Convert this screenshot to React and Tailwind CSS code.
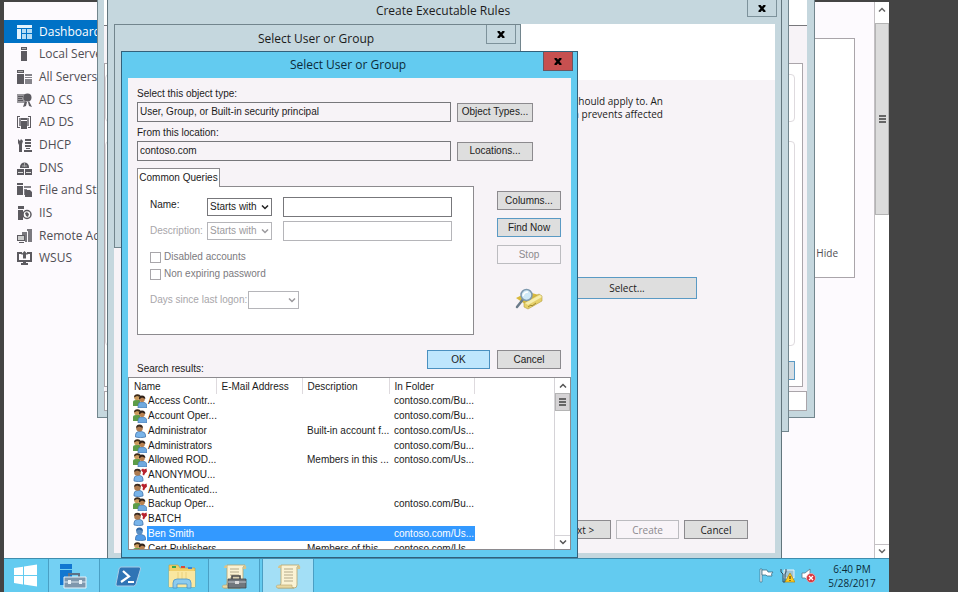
import React, { useState } from "react";
import clsx from "clsx";

const NAV_ITEMS = [
  { label: "Dashboard", icon: "dashboard" },
  { label: "Local Server", icon: "server" },
  { label: "All Servers", icon: "servers" },
  { label: "AD CS", icon: "adcs" },
  { label: "AD DS", icon: "adds" },
  { label: "DHCP", icon: "dhcp" },
  { label: "DNS", icon: "dns" },
  { label: "File and Storage", icon: "files" },
  { label: "IIS", icon: "iis" },
  { label: "Remote Access", icon: "remote" },
  { label: "WSUS", icon: "wsus" },
];

const RESULTS = [
  { name: "Access Contr...", type: "group", folder: "contoso.com/Bu..." },
  { name: "Account Oper...", type: "group", folder: "contoso.com/Bu..." },
  { name: "Administrator", type: "user", description: "Built-in account f...", folder: "contoso.com/Us..." },
  { name: "Administrators", type: "group", folder: "contoso.com/Bu..." },
  { name: "Allowed ROD...", type: "group", description: "Members in this ...", folder: "contoso.com/Us..." },
  { name: "ANONYMOU...", type: "special" },
  { name: "Authenticated...", type: "special" },
  { name: "Backup Oper...", type: "group", folder: "contoso.com/Bu..." },
  { name: "BATCH", type: "special" },
  { name: "Ben Smith", type: "user", folder: "contoso.com/Us..." },
  { name: "Cert Publishers", type: "group", description: "Members of this ...", folder: "contoso.com/Us..." },
];

const NAV_SHAPES = {
  dashboard: (
    <>
      <path d="M0 0h15v3H0zM0 4h4v10H0z" />
      <path d="M5 4h4v4H5zM10 4h5v4h-5zM5 9h4v5H5zM10 9h5v5h-5z" fill="#b5dcf5" />
    </>
  ),
  server: (
    <>
      <path d="M4 0h6v3H4zM4 4h6v10H4z" />
      <path d="M5 1h4v1H5z" fill="#aaa" />
    </>
  ),
  servers: (
    <>
      <path d="M0 0h7v3H0zM0 4h7v10H0z" />
      <path d="M8 4h7v2H8zM8 7h7v1H8zM8 9h7v5H8z" fill="#85838a" />
      <path d="M1 1h5v1H1z" fill="#aaa" />
    </>
  ),
  adcs: (
    <>
      <path d="M0 1h8v9H0z" fill="#9a989d" />
      <path d="M1 3h5v1H1zM1 5h4v1H1zM1 7h5v1H1z" fill="#5c5a60" />
      <circle cx="10.5" cy="4.5" r="4" />
      <path d="M8 8l-2 6 3-1 1-4zM12 8l3 6-3-1-1-4z" />
    </>
  ),
  adds: (
    <>
      <path d="M0 1h3v1H1v10h2v1H0zM14 1h-3v1h2v10h-2v1h3z" />
      <path d="M2 3h2v8H2zM10 3h2v8h-2z" fill="#8a888e" />
      <path d="M4 3h6v2H4zM4 6h6v8H4z" />
    </>
  ),
  dhcp: (
    <>
      <path d="M1 1l2 2 1-2 2 2-1 3v8H2V7L1 5z" />
      <path d="M8 1h6v2H8zM8 4h6v2H8zM8 7h6v2H8zM9 10h4v1H9zM7 12h8v2H7z" />
    </>
  ),
  dns: (
    <>
      <path d="M3 6a4.500 4.500 0 0 1 9 0v1H3z" />
      <path d="M5 5h5M7.500 2v4" stroke="#aaa" strokeWidth="1" />
      <path d="M0 8h7v6H0zM8 8h7v6H8z" />
      <path d="M1 11h5v1H1zM9 11h5v1H9z" fill="#ddd" />
    </>
  ),
  files: (
    <>
      <path d="M0 0h6v2H0zM0 3h6v9H0z" />
      <path d="M7 3h7v2H7zM7 6h3v6H7z" fill="#85838a" />
      <path d="M8 7h5l2 2v5H8z" />
    </>
  ),
  iis: (
    <>
      <path d="M1 0h6v3H1zM1 4h5v10H1z" />
      <circle cx="10" cy="8.500" r="4" fill="#fff" stroke="#5c5a60" strokeWidth="1.500" />
      <path d="M8 7l2-1 2 2-1 3-2-1z" />
    </>
  ),
  remote: (
    <>
      <path d="M10 0h5v13h-4V2h-1zM5 3h5v10H8V6H5z" fill="#7b797f" />
      <path d="M0 6h8v6H0zM2 13h5v1H2z" />
      <path d="M1 7h6v4H1z" fill="#ccc" />
    </>
  ),
  wsus: (
    <>
      <path d="M0 1h5v2H2v6h11V3h-3V1h5v10H9v1h2v2H4v-2h2v-1H0z" />
      <path d="M7.500 0l3.500 3.500H9v4H6v-4H4z" />
    </>
  ),
};

const NavIcon = ({ name, active }) => (
  <svg viewBox="0 0 15 14" className="w-[15px] h-[14px] shrink-0" fill={active ? "#e4f3fd" : "#5c5a60"} aria-hidden="true">
    {NAV_SHAPES[name]}
  </svg>
);

const PersonIcon = ({ type, selected }) => (
  <svg viewBox="0 0 14 14" className="w-[14px] h-[14px] shrink-0" aria-hidden="true">
    {type === "group" && (
      <>
        <path d="M0 12V8q0-2 3-2h4v6z" fill="#5c9c48" />
        <circle cx="4" cy="3.500" r="2.800" fill="#c99b5c" />
        <path d="M1 3.500Q1 .3 4.500.3T7.500 3L4 2z" fill="#3d2b1b" />
        <path d="M5 14v-3q0-3 4-3t5 3v3z" fill="#6fa9df" stroke="#3f70a5" strokeWidth=".6" />
        <circle cx="9" cy="5.200" r="2.800" fill="#b98252" />
        <path d="M6 5.500Q5.500 1.500 9 1.500T12.300 5L9 3.500z" fill="#2f2119" />
      </>
    )}
    {type === "user" && (
      <>
        <path
          d="M2.500 13v-2q0-3 3-3.500h3q4 .5 4 3.500v2q-5 1.500-10 0z"
          fill={selected ? "#4f9be8" : "#78b4ea"}
          stroke="#3a6ca5"
          strokeWidth=".7"
        />
        <circle cx="6.500" cy="4.300" r="3.300" fill={selected ? "#5a8fc4" : "#ad7b50"} />
        <path d="M3.200 4Q3 .5 6.500.5T9.800 4L6 2.500z" fill={selected ? "#2d64a3" : "#3a2a20"} />
      </>
    )}
    {type === "special" && (
      <>
        <path d="M1 13v-2q0-3 3-3.500h3q3 .5 3 3.500v2q-4 1.500-9 0z" fill="#78b4ea" stroke="#3a6ca5" strokeWidth=".7" />
        <circle cx="4.500" cy="4.500" r="3.300" fill="#ad7b50" />
        <path d="M1.200 4Q1 .8 4.500.8T7.800 4L4 2.500z" fill="#3a2a20" />
        <path d="M8 2l2-1.500 1 1 2.500-1 .5 3-2 2-1 2-1.500-1 .5-2z" fill="#b8202c" />
      </>
    )}
  </svg>
);

const Chevron = ({ up = false }) => (
  <svg viewBox="0 0 8 5" className="w-2 h-[5px]" fill="none" stroke="currentColor" strokeWidth="1.500" aria-hidden="true">
    <path d={up ? "M1 4.500L4 1.500L7 4.500" : "M1 .5L4 3.500L7 .5"} />
  </svg>
);

const Grip = () => (
  <svg viewBox="0 0 7 8" className="w-[7px] h-2" fill="#666" aria-hidden="true">
    <path d="M0 0h7v2H0zM0 3h7v2H0zM0 6h7v2H0z" />
  </svg>
);

const DialogButton = ({ className, ...props }) => (
  <button
    type="button"
    className={clsx(
      "h-[19px] border leading-none whitespace-nowrap",
      props.disabled ? "border-[#bcbcc0] bg-[#f8f4f8] text-[#8c8a8e]" : "text-[#1b1b1b]",
      className
    )}
    {...props}
  />
);

const CloseButton = ({ active = false, className }) => (
  <button
    type="button"
    aria-label="Close"
    className={clsx(
      "absolute top-0 w-[30px] flex items-center justify-center border border-t-0 text-black",
      active ? "bg-[#c75050] border-[#6c5560]" : "border-[#7d929b]",
      className
    )}
  >
    <svg viewBox="0 0 8 7" className="w-2 h-[7px]" stroke="currentColor" strokeWidth="2.400" aria-hidden="true">
      <path d="M1 0L7 7M7 0L1 7" />
    </svg>
  </button>
);

const Dropdown = ({ id, label, disabled, className, children }) => (
  <div className={clsx("relative flex items-center", disabled ? "text-[#9c9a9e]" : "text-[#222]", className)}>
    <select
      id={id}
      aria-label={label}
      disabled={disabled}
      className={clsx(
        "appearance-none w-full h-[18px] pl-[2px] pr-3 border bg-white leading-none",
        disabled ? "border-[#b5b5b9]" : "border-[#77777b]"
      )}
    >
      {children}
    </select>
    <span className="absolute right-[3px] pointer-events-none">
      <Chevron />
    </span>
  </div>
);

const ServerManager = () => (
  <div className="absolute inset-x-0 top-[2px] bottom-0 bg-[#fdfafe] flex">
    <nav className="w-[150px] pt-[18px] font-['Open_Sans',sans-serif] text-xs">
      <ul className="h-[249px] flex flex-col">
        {NAV_ITEMS.map((item, index) => (
          <li key={item.label} className="flex-1 flex">
            <a
              href="#"
              className={clsx(
                "w-full flex items-center gap-[7px] pl-[13px] pt-px whitespace-nowrap leading-none",
                index === 0 ? "bg-[#0072c6] text-white" : "text-[#504e54]"
              )}
            >
              <NavIcon name={item.icon} active={index === 0} />
              {item.label}
            </a>
          </li>
        ))}
      </ul>
    </nav>
    <main className="flex-1 pt-9 pr-[19px]">
      <div className="h-60 border border-[#aaa5aa] bg-white flex items-end justify-end pr-4 pb-[17px]">
        <a href="#" className="font-['Open_Sans',sans-serif] text-[10px] leading-[14px] text-[#504e54]">
          Hide
        </a>
      </div>
    </main>
    <div className="w-[15px] border-l border-[#c4c0c4] bg-white flex flex-col items-center text-[#666]">
      <div className="h-[15px] flex items-center"><Chevron up /></div>
      <div className="mt-[6px] w-full h-[192px] bg-[#dcdcdc] border border-[#b4b4b4] flex items-center justify-center">
        <Grip />
      </div>
      <div className="mt-auto w-full h-[14px] border-t border-[#c4c0c4] flex items-center justify-center">
        <Chevron />
      </div>
    </div>
  </div>
);

const PolicyWindow = () => (
  <section className="absolute left-[93px] top-0 w-[718px] h-[418px] pl-[6px] pr-[7px] pb-[6px] bg-[#c5d7de] border border-t-0 border-[#72858d] flex flex-col">
    <div className="h-[26px] bg-white border-b border-[#77777b]" />
    <div className="flex-1 bg-[#f7f3f7] pt-[37px] pr-1 pb-1">
      <div className="h-full bg-white border border-[#aaa5aa] pt-[10px] pr-[7px] flex flex-col gap-[19px]">
        <div className="h-12 border border-[#dedade] rounded-sm" />
        <div className="h-[205px] border border-[#dedade] rounded-sm" />
        <DialogButton aria-label="Apply" className="-mt-1 self-end w-[76px] border-[#5a9ac4] bg-[#d6dde2]" />
      </div>
    </div>
    <div className="h-5 bg-white border border-[#aaa5aa]" />
  </section>
);

const PropertiesWindow = () => (
  <section className="absolute left-[103px] top-0 w-[682px] h-[432px] bg-[#c5d7de] border border-t-0 border-[#72858d]" />
);

const RulesWindow = () => (
  <section className="absolute left-[103px] top-0 w-[675px] h-[558px] pl-[6px] pr-[6px] pb-[5px] bg-[#c5d7de] border-x border-[#62757d] flex flex-col font-['Open_Sans',sans-serif] text-[#1b1b1b]">
    <header className="h-6 pr-[3px] text-center text-xs leading-[22px]">
      Create Executable Rules
      <CloseButton className="right-1 h-[17px]" />
    </header>
    <div className="h-14 bg-white" />
    <div className="flex-1 bg-[#f7f3f7] pt-[15px] flex flex-col items-end">
      <p className="pr-[112px] text-[10px] leading-[13px] text-right">
        should apply to. An
        <br />
        action prevents affected
      </p>
      <DialogButton className="mt-[156px] mr-[78px] w-[140px] h-[22px] text-[10px] border-[#5a9ac4] bg-[#dedede]">
        Select...
      </DialogButton>
      <footer className="mt-auto mb-[14px] pr-[27px] flex gap-[5px] text-[10px]">
        <DialogButton className="w-16 h-5 border-[#8c8a8e] bg-[#dedede]">Next &gt;</DialogButton>
        <DialogButton disabled className="w-[63px] h-5">Create</DialogButton>
        <DialogButton className="w-16 h-5 border-[#8c8a8e] bg-[#dedede]">Cancel</DialogButton>
      </footer>
    </div>
  </section>
);

const PickerWindow = () => (
  <section className="absolute left-[110px] top-[24px] w-[407px] h-[224px] bg-[#c5d7de] border border-[#72858d]">
    <header className="pr-[3px] text-center text-xs leading-[27px] font-['Open_Sans',sans-serif] text-[#1b1b1b]">
      Select User or Group
      <CloseButton className="right-1 h-[19px]" />
    </header>
  </section>
);

const FindIcon = () => (
  <svg viewBox="0 0 28 22" className="w-7 h-[22px]" aria-hidden="true">
    <path d="M1 10l12-6 11 3-14 9z" fill="#d9b93c" />
    <path d="M9 15l15-9 3 2v5l-14 8-4-2z" fill="#e6d06a" stroke="#b59d3e" strokeWidth=".6" />
    <path d="M10 15l15-8 2 2-14 8z" fill="#f6edac" />
    <path d="M13 19l3-2 1 1 4-3" stroke="#a18a31" fill="none" />
    <path d="M7.500 12L2 19" stroke="#6b7b8a" strokeWidth="2.500" strokeLinecap="round" />
    <circle cx="11.500" cy="7" r="5.500" fill="#cfe9f6" stroke="#7e99ae" strokeWidth="1.500" />
    <path d="M8 8q1-4 5-4" stroke="#fff" strokeWidth="1.500" fill="none" />
  </svg>
);

const QueryPanel = () => (
  <div className="w-[337px]">
    <div role="tab" className="relative w-[83px] h-[19px] -mb-px border border-b-0 border-[#8c8a8e] bg-white text-center leading-[17px] whitespace-nowrap">
      Common Queries
    </div>
    <div className="h-[149px] border border-[#8c8a8e] bg-white pl-3 pr-[21px] pt-[10px]">
      <div className="flex items-center gap-[11px]">
        <label htmlFor="name" className="w-[46px] pb-1 text-[#1b1b1b]">Name:</label>
        <Dropdown label="Name condition" className="w-[65px]">
          <option>Starts with</option>
        </Dropdown>
        <input id="name" className="flex-1 min-w-0 h-5 border border-[#77777b] px-1" />
      </div>
      <div className="mt-1 flex items-center gap-[11px]">
        <label htmlFor="description" className="w-[46px] text-[#a8a6aa]">Description:</label>
        <Dropdown label="Description condition" disabled className="w-[65px]">
          <option>Starts with</option>
        </Dropdown>
        <input id="description" disabled className="flex-1 min-w-0 h-5 border border-[#b5b5b9] px-1" />
      </div>
      <div className="mt-[10px] flex flex-col gap-[5px] text-[#7c7a7e]">
        <label className="h-3 flex items-center gap-[3px]">
          <input type="checkbox" disabled className="appearance-none w-[11px] h-[11px] border border-[#a8a6aa] bg-white" />
          Disabled accounts
        </label>
        <label className="h-3 flex items-center gap-[3px]">
          <input type="checkbox" disabled className="appearance-none w-[11px] h-[11px] border border-[#a8a6aa] bg-white" />
          Non expiring password
        </label>
      </div>
      <div className="mt-[11px] flex items-center">
        <label htmlFor="logon" className="w-[98px] whitespace-nowrap text-[#a8a6aa]">Days since last logon:</label>
        <Dropdown id="logon" disabled className="w-[51px]" />
      </div>
    </div>
  </div>
);

const ResultsTable = ({ selected, onSelect }) => (
  <div className="h-[173px] border border-[#8c8a8e] bg-white flex overflow-hidden">
    <div className="flex-1 overflow-hidden">
      <table className="h-[178px] table-fixed w-[346px] border-collapse text-[#1b1b1b] whitespace-nowrap">
        <thead>
          <tr className="h-4 text-left">
            <th className="w-[87px] p-0 pl-[5px] font-normal leading-[15px] border-r border-[#dedade]">Name</th>
            <th className="w-[86px] p-0 pl-[5px] font-normal leading-[15px] border-r border-[#dedade]">E-Mail Address</th>
            <th className="w-[87px] p-0 pl-[5px] font-normal leading-[15px] border-r border-[#dedade]">Description</th>
            <th className="p-0 pl-[5px] font-normal leading-[15px] border-r border-[#dedade]">In Folder</th>
          </tr>
        </thead>
        <tbody>
          {RESULTS.map((row) => {
            const isSelected = row.name === selected;
            const cell = clsx("p-0 pl-[5px] leading-[14px]", isSelected && "bg-[#3399ff] text-white");
            return (
              <tr key={row.name} onClick={() => onSelect(row.name)}>
                <td
                  className={clsx(
                    "p-0 pl-1 leading-[14px]",
                    isSelected && "bg-[linear-gradient(to_right,#fff_18px,#3399ff_18px)] text-white"
                  )}
                >
                  <div className="flex items-center gap-px">
                    <PersonIcon type={row.type} selected={isSelected} />
                    {row.name}
                  </div>
                </td>
                <td className={cell}></td>
                <td className={cell}>{row.description}</td>
                <td className={cell}>{row.folder}</td>
              </tr>
            );
          })}
        </tbody>
      </table>
    </div>
    <div className="w-[16px] border-l border-[#d5d3d7] flex flex-col items-center text-[#555]">
      <div className="h-[15px] flex items-center"><Chevron up /></div>
      <div className="w-full h-[18px] bg-[#d5d3d5] border border-[#b4b4b4] flex items-center justify-center">
        <Grip />
      </div>
      <div className="mt-auto w-full h-[14px] border-t border-[#d5d3d7] flex items-center justify-center">
        <Chevron />
      </div>
    </div>
  </div>
);

const FindWindow = () => {
  const [selected, setSelected] = useState("Ben Smith");

  return (
    <section className="absolute left-[117px] top-[51px] w-[457px] h-[507px] px-[6px] pb-[7px] bg-[#63cbf0] border border-[#33607a] flex flex-col">
      <header className="h-[26px] pr-[3px] text-center text-xs leading-[26px] font-['Open_Sans',sans-serif] text-[#0c2b3a]">
        Select User or Group
        <CloseButton active className="right-1 h-[19px]" />
      </header>
      <div className="flex-1 bg-[#f7f3f7] flex flex-col font-['Liberation_Sans',Arial,sans-serif] text-[10px] leading-3 text-[#1b1b1b]">
        <div className="pl-[9px] pr-[10px] pt-[10px] flex-1">
          <label htmlFor="objectType" className="block">Select this object type:</label>
          <div className="mt-[2px] flex items-center gap-[6px]">
            <input id="objectType" readOnly value="User, Group, or Built-in security principal" className="w-[314px] h-5 border border-[#77777b] px-[2px] pb-[2px]" />
            <DialogButton className="w-[76px] border-[#8c8a8e] bg-[#dedede]">Object Types...</DialogButton>
          </div>
          <label htmlFor="location" className="mt-[5px] block">From this location:</label>
          <div className="mt-[2px] flex items-center gap-[6px]">
            <input id="location" readOnly value="contoso.com" className="w-[314px] h-5 border border-[#77777b] px-[2px] pb-[2px]" />
            <DialogButton className="w-[76px] border-[#8c8a8e] bg-[#dedede]">Locations...</DialogButton>
          </div>
          <div className="mt-[7px] flex justify-between">
            <QueryPanel />
            <div className="w-16 pt-[23px] flex flex-col gap-2 items-stretch">
              <DialogButton className="border-[#8c8a8e] bg-[#dedede]">Columns...</DialogButton>
              <DialogButton className="border-[#5a9ac4] bg-[#dedede]">Find Now</DialogButton>
              <DialogButton disabled>Stop</DialogButton>
              <div className="pt-4 flex justify-center"><FindIcon /></div>
            </div>
          </div>
          <div className="mt-[15px] flex justify-end gap-[7px]">
            <DialogButton className="w-[63px] border-[#4a90c0] bg-[#bee6fd]">OK</DialogButton>
            <DialogButton className="w-16 border-[#8c8a8e] bg-[#dedede]">Cancel</DialogButton>
          </div>
          <div className="-mt-[6px]">Search results:</div>
        </div>
        <ResultsTable selected={selected} onSelect={setSelected} />
      </div>
    </section>
  );
};

const Scroll = () => (
  <>
    <path d="M7 2h18q-3 2-2 5v15q0 3-3 3H4q3-2 3-5z" fill="#fbf3d4" stroke="#b5a26c" strokeWidth=".8" />
    <path d="M7 2Q4 2 4 5h3zM23 6h3q1-4-2-4z" fill="#d8c48a" />
    <path d="M3 25q-2-3 2-3h13q-1 3 2 3z" fill="#e8d8a2" stroke="#b5a26c" strokeWidth=".6" />
    <path d="M10 6h9M10 9h9M10 12h9M10 15h9M10 18h9" stroke="#b3a98a" />
  </>
);

const TASKS = [
  {
    label: "Start",
    className: "w-[44px]",
    icon: (
      <path d="M2 5l9-1.300V12H2zM12 3.500L25 1.500V12H12zM2 13h9v8.500L2 20zM12 13h13v10.500l-13-2z" fill="#fff" />
    ),
  },
  {
    label: "Server Manager",
    className: "w-[52px] border-x border-[#4a9fc4] bg-[#74d0f3]",
    icon: (
      <>
        <path d="M0 1h12v5H0zM0 7h12v15H0z" fill="#1177d1" />
        <path d="M9 14v-3h10v3" fill="none" stroke="#5c7187" strokeWidth="2" />
        <path d="M4 14h22v11H4z" fill="#7e97ad" stroke="#e9f3f9" />
        <path d="M4 19h22" stroke="#dbe7ef" />
        <path d="M8 17h3v4H8zM19 17h3v4h-3z" fill="#e9f3f9" />
      </>
    ),
  },
  {
    label: "PowerShell",
    className: "w-[55px]",
    icon: (
      <>
        <path d="M7 4h18q2 0 1.500 2L22 21q-.5 2-2.500 2H3.500q-2 0-1.500-2L5 6q.5-2 2-2z" fill="#2f74b5" stroke="#a9cbe6" />
        <path d="M9 8l6 5.500L7 19M14 19h6" fill="none" stroke="#fff" strokeWidth="2.200" />
      </>
    ),
  },
  {
    label: "File Explorer",
    className: "w-[53px]",
    icon: (
      <>
        <path d="M1 2h9l2 3h15v19H1z" fill="#f0cf6a" stroke="#c39f3c" strokeWidth=".6" />
        <path d="M4 3h4v2H4z" fill="#35a852" />
        <path d="M13 3h4v2h-4z" fill="#d84b3a" />
        <path d="M20 4h4v2h-4z" fill="#3c87d8" />
        <path d="M1 8h26v16H1z" fill="#fae7a0" />
        <path d="M10 9v7M14 9v7M18 9v7" stroke="#ead07c" />
        <path d="M5 25v-5q0-4 4-4h10q4 0 4 4v5h-4v-4H9v4z" fill="#8ccbee" stroke="#4b94c6" strokeWidth=".8" />
      </>
    ),
  },
  {
    label: "Local Security Policy",
    className: "w-[52px] border-x border-[#4a9fc4] bg-[#74d0f3]",
    icon: (
      <>
        <Scroll />
        <path d="M12 16v-3h8v3" fill="none" stroke="#444" strokeWidth="1.500" />
        <path d="M8 16h18v9H8z" fill="#70777d" stroke="#40464b" strokeWidth=".8" />
        <path d="M8 19h18" stroke="#c5cbd0" />
        <path d="M15 18h4v3h-4z" fill="#ddd" />
      </>
    ),
  },
  {
    label: "Group Policy Editor",
    className: "w-[52px] ml-[2px] border-x border-[#4a9fc4] bg-[#a3dff6]",
    icon: <Scroll />,
  },
];

const Taskbar = () => (
  <footer className="h-[34px] bg-[#63cbf0] border-t border-[#3f8dae] flex">
    {TASKS.map((task) => (
      <button key={task.label} type="button" aria-label={task.label} className={clsx("flex items-center justify-center", task.className)}>
        <svg viewBox="0 0 28 26" className="w-7 h-[26px]" aria-hidden="true">{task.icon}</svg>
      </button>
    ))}
    <div className="ml-auto flex items-center gap-[6px]">
      <svg viewBox="0 0 15 15" className="w-[15px] h-[15px]" aria-hidden="true">
        <path d="M1 1h2v13H1z" fill="#fff" stroke="#3c6f87" strokeWidth=".7" />
        <path d="M3 2h5l1 2h5l-1.500 2L13 8H8L7 7H3z" fill="#fff" stroke="#3c6f87" strokeWidth=".8" />
      </svg>
      <svg viewBox="0 0 15 15" className="w-[15px] h-[15px]" aria-hidden="true">
        <path d="M4 2h10v8H4z" fill="#9dc3d6" stroke="#e8f4fa" />
        <path d="M1 1v3l2 2v8h2V6l1-2V1" fill="none" stroke="#34495a" />
        <path d="M10 5l5 9H5z" fill="#ffcb1f" stroke="#a77a00" strokeWidth=".6" />
        <path d="M9.500 8h1v3h-1zM9.500 12h1v1h-1z" fill="#222" />
      </svg>
      <svg viewBox="0 0 15 15" className="w-[15px] h-[15px]" aria-hidden="true">
        <path d="M1 5h3l5-4v13l-5-4H1z" fill="#fff" stroke="#59798a" strokeWidth=".8" />
        <circle cx="10" cy="10" r="4.500" fill="#d8323a" stroke="#f4c9cb" strokeWidth=".6" />
        <path d="M8 8l4 4M12 8l-4 4" stroke="#fff" strokeWidth="1.300" />
      </svg>
      <time className="w-[60px] mr-[7px] text-center font-['Open_Sans',sans-serif] text-[10px] leading-[14px] text-[#0c2b3a]">
        6:40 PM
        <br />
        5/28/2017
      </time>
    </div>
  </footer>
);

const App = () => {
  return (
    <div className="h-screen pl-1 pr-[69px] bg-[#444] flex flex-col">
      <div className="relative flex-1 overflow-hidden">
        <ServerManager />
        <PolicyWindow />
        <PropertiesWindow />
        <RulesWindow />
        <PickerWindow />
        <FindWindow />
      </div>
      <Taskbar />
    </div>
  );
};

export default App;
